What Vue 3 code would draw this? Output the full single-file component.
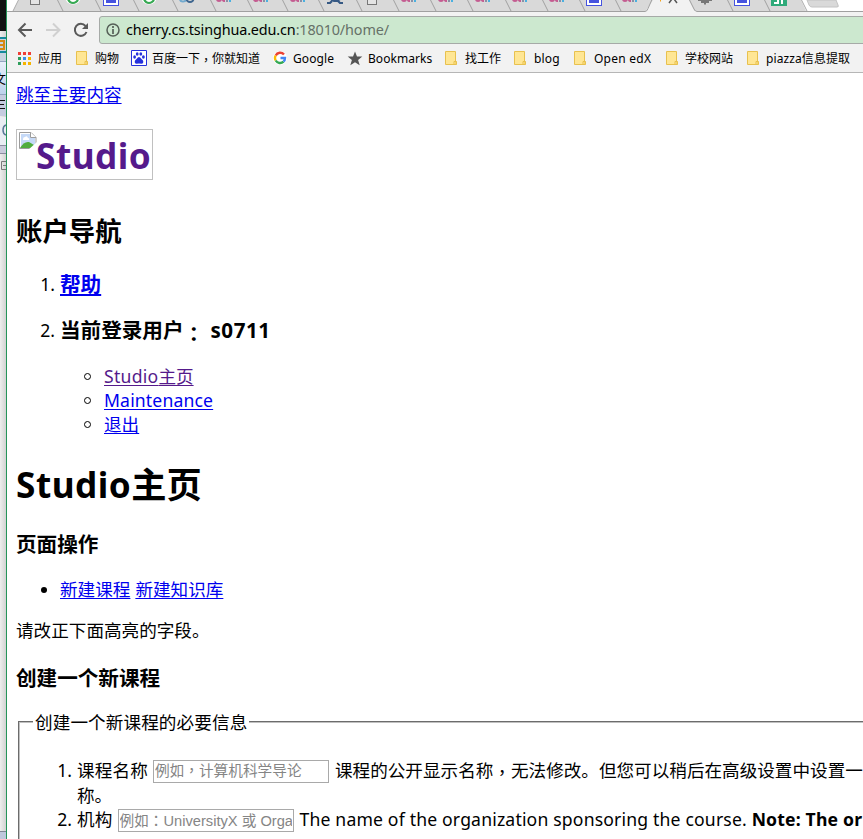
<script setup>
const separators = [57, 95, 133, 172, 210, 247, 282, 318, 356, 393, 430, 467, 505, 542, 579, 615, 727, 764]
const docs = [35, 372]
const googles = [73, 149]
const paws = [111, 594, 742]
const marks = [224, 261, 298, 409, 446, 483, 520, 557, 630]
const dots = [0, 1, 2, 3, 4, 5, 6, 7, 8]
const dotColors = ['#ef3e36', '#ef3e36', '#ef3e36', '#2f9e5b', '#3b8de8', '#f5b400', '#2f9e5b', '#f5b400', '#f5b400']
const bookmarks = [
  { icon: 'folder', text: '购物', cls: 'b1' },
  { icon: 'baidu', text: '百度一下', tail: '你就知道', cls: 'b2' },
  { icon: 'google', text: 'Google', cls: 'b3' },
  { icon: 'star', text: 'Bookmarks', cls: 'b4' },
  { icon: 'folder', text: '找工作', cls: 'b5' },
  { icon: 'folder', text: 'blog', cls: 'b6' },
  { icon: 'folder', text: 'Open edX', cls: 'b7' },
  { icon: 'folder', text: '学校网站', cls: 'b8' },
  { icon: 'folder', text: 'piazza信息提取', cls: 'b9' }
]
</script>

<template>
  <div class="screen">
    <svg class="behind" width="6" height="839" viewBox="0 0 6 839">
      <defs>
        <linearGradient id="edge"><stop offset="0" stop-color="#eeeeee" /><stop offset="1" stop-color="#d2d2d2" /></linearGradient>
        <linearGradient id="bar" x2="0" y2="1"><stop offset="0" stop-color="#e8f0fa" /><stop offset="1" stop-color="#bdd2ec" /></linearGradient>
      </defs>
      <rect width="6" height="839" fill="url(#edge)" />
      <rect width="6" height="31" fill="#111" />
      <rect y="37" width="6" height="24" fill="#c7d3e0" />
      <path d="M0 38h6M0 52h6" stroke="#16899d" stroke-width="2" />
      <path d="M0 41h4v8H0M0 45h3" fill="none" stroke="#d58a12" stroke-width="2" />
      <rect y="61" width="6" height="33" fill="url(#bar)" />
      <rect y="95" width="6" height="21" fill="#c5cce0" />
      <path d="M0 61.500h6M0 94.500h6" stroke="#93a5c1" />
      <text x="-7" y="83" font-size="13">文</text>
      <path d="M0 100.500h5M0 104.500h4M0 108.500h5" stroke="#111" />
      <rect y="117" width="6" height="28" fill="#e9edf3" />
      <path d="M6 125q-3 1-3 5t3 5" fill="none" stroke="#5b7898" stroke-width="1.500" />
      <rect y="146" width="6" height="7" fill="#c9cbdc" />
      <path d="M0 145.500h6M0 153.500h6" stroke="#8b8ca0" />
      <path d="M6 161.500H1.500v8H6M3 165.500h3" fill="none" stroke="#7a7a7a" />
      <rect y="832" width="6" height="7" fill="#bfc7dc" /><path d="M0 831.500h6" stroke="#808695" />
    </svg>
    <div class="window">
      <svg class="tabs" width="856" height="12" viewBox="7 0 856 12">
        <rect x="7" width="856" height="12" fill="#fff" />
        <path d="M19 0H801l5 11H13z" fill="#d9d9d9" />
        <path d="M19-1l-6 12M801-1l6 12" stroke="#a9a9a9" fill="none" />
        <path v-for="s in separators" :key="s" :d="`M${s} -1l6 12`" stroke="#a0a0a0" fill="none" />
        <g v-for="x in docs" :key="x"><rect :x="x - 4.5" y="-8.500" width="9" height="13" fill="#e4e4e4" stroke="#777" /></g>
        <g v-for="x in googles" :key="x">
          <circle :cx="x" cy="-3.500" r="8" fill="#fff" />
          <path :d="`M${x - 5} -1q1.500 4 5 4q3 0 5-3`" fill="none" stroke="#36a852" stroke-width="2.200" />
        </g>
        <g v-for="x in paws" :key="x">
          <rect :x="x - 7.5" y="-9.500" width="15" height="15" fill="#fff" stroke="#4653df" />
          <path :d="`M${x - 5} 3v-3l2-2h6l2 2v3z`" fill="#4653df" />
        </g>
        <g v-for="x in marks" :key="x" fill="none" stroke-width="2">
          <path :d="`M${x - 7} -1q0 2 2 2t2-2M${x - 1} -2v2q0 1 2 1`" stroke="#c45c91" />
          <path :d="`M${x + 3} -2v4`" stroke="#8b8fa5" />
          <path :d="`M${x + 6} -2v4`" stroke="#4ab0e0" />
        </g>
        <g fill="none" stroke-width="2"><circle cx="183" cy="-1.500" r="3" stroke="#71a9ce" /><circle cx="190" cy="-1.500" r="3.500" stroke="#3f668f" /></g>
        <path d="M327 3h3l2-2M343 3h-3l-2-2M331-1l3 2h3l3-2" stroke="#365984" stroke-width="2.200" fill="none" />
        <path d="M653 0h36l6 12H645z" fill="#f2f2f2" />
        <path d="M7 11.500h638q2 0 3-3l4-9M689-1l5 10q1 2.500 3 2.500h166" fill="none" stroke="#a0a0a0" />
        <path d="M660 0h1" stroke="#f4a11a" stroke-width="3" />
        <path d="M669 3l3-4M677 3l-3-4" stroke="#555" stroke-width="1.500" />
        <path d="M698-1h14v2h-3v2h-3v1.500h-2V3h-3V1h-3z" fill="#777" />
        <rect x="771" y="-8" width="16" height="14" fill="#2faa7a" />
        <path d="M774 3h4V0M782 0v4" stroke="#fff" stroke-width="2" fill="none" />
        <path d="M807 0l2 5q1 2 3 2h25q2 0 1-2l-2-5z" fill="#d9d9d9" stroke="#c2c2c2" />
      </svg>
      <div class="toolbar">
        <svg class="nav" width="92" height="30" viewBox="7 14 92 30" fill="none" stroke-width="2">
          <path d="M32 31H19.500M25.500 24.500l-6.500 6.500 6.500 6.500" stroke="#5a5a5a" />
          <path d="M46 31h12.500M53 24.500l6.500 6.500-6.500 6.500" stroke="#d0d0d0" />
          <path d="M85.500 27a6 6 0 1 0 1 6" stroke="#5a5a5a" />
          <path d="M88 24v6h-6z" fill="#5a5a5a" />
        </svg>
        <div class="address">
          <svg width="14" height="14" viewBox="0 0 14 14"><circle cx="7" cy="7" r="6" fill="none" stroke="#555f57" stroke-width="1.500" /><path d="M7 6v5M7 3v2" stroke="#555f57" stroke-width="1.700" /></svg>
          <span class="url">cherry.cs.tsinghua.edu.cn<i>:18010/home/</i></span>
        </div>
      </div>
      <div class="bookmarks">
        <div class="bm b0">
          <svg width="13" height="13"><rect v-for="d in dots" :key="d" :x="(d % 3) * 5" :y="Math.floor(d / 3) * 5" width="3" height="3" :fill="dotColors[d]" /></svg>
          <span>应用</span>
        </div>
        <div v-for="b in bookmarks" :key="b.cls" class="bm" :class="b.cls">
          <svg v-if="b.icon === 'folder'" width="13" height="15" viewBox="0 0 13 15"><path d="M.5.500h10v10h1v3H.5z" fill="#ffe694" stroke="#e8c14e" /><path d="M9 13.500v-3h2v3z" fill="#ffe694" stroke="#e8c14e" /></svg>
          <svg v-else-if="b.icon === 'baidu'" width="16" height="16" viewBox="0 0 16 16"><path d="M.5.500h15v15H.5z" fill="#fff" stroke="#2631dc" /><g fill="#2631dc"><ellipse cx="3.600" cy="7" rx="1.400" ry="1.800" /><ellipse cx="6.200" cy="4" rx="1.400" ry="1.800" /><ellipse cx="9.800" cy="4" rx="1.400" ry="1.800" /><ellipse cx="12.400" cy="7" rx="1.400" ry="1.800" /><path d="M8 7q1.300 0 2 1.500l2 2q1 3-1.500 3.300Q8 13 5.500 13.800 3 13.500 4 10.500l2-2Q6.700 7 8 7z" /></g></svg>
          <svg v-else-if="b.icon === 'google'" width="14" height="14" viewBox="0 0 14 14" fill="none" stroke-width="2.400"><circle cx="7" cy="7" r="7" fill="#fff" /><path d="M11 3.500A5 5 0 0 0 2.700 4.500" stroke="#ea4335" /><path d="M2.700 4.500a5 5 0 0 0 0 5" stroke="#fbbc05" /><path d="M2.700 9.500A5 5 0 0 0 10.500 10.600" stroke="#34a853" /><path d="M10.500 10.600Q12 9.500 12 7H7.500" stroke="#4285f4" /></svg>
          <svg v-else width="16" height="15" viewBox="0 0 16 15"><path d="M8 .5l2 5h5.300l-4.200 3.400 1.600 5.300L8 11.200l-4.700 3 1.600-5.300L.7 5.500H6z" fill="#555" /></svg>
          <span>{{ b.text }}<template v-if="b.tail"><span class="mid">，</span>{{ b.tail }}</template></span>
        </div>
      </div>
      <main class="page">
        <div class="skip"><a>跳至主要内容</a></div>
        <div class="logo">
          <svg width="18" height="18" viewBox="0 0 18 18"><path d="M.5.500H12l5 5v11H.5z" fill="#fff" stroke="#9c9c9c" /><path d="M2 2h9.500v4H16v9H2z" fill="#c5d9f7" /><path d="M11.500.500v5H17" fill="#fff" stroke="#9c9c9c" /><path d="M4 7q0-2 2-2 2-2 3 1 2 0 1 2H4z" fill="#fff" /><path d="M1 16q4-7 9-6l5 3v3z" fill="#50ac3d" /><path d="M9 18l9-8v8z" fill="#fff" /></svg>
          <span>Studio</span>
        </div>
        <h2>账户导航</h2>
        <div class="item first"><span class="num">1.</span><a class="h3">帮助</a></div>
        <div class="item second"><span class="num">2.</span><span class="h3">当前登录用户<span class="mid">：</span> <span class="user">s0711</span></span></div>
        <ul class="account">
          <li><a class="visited"><span class="latin">Studio</span>主页</a></li>
          <li><a class="maint">Maintenance</a></li>
          <li><a>退出</a></li>
        </ul>
        <h1><span>Studio</span>主页</h1>
        <h3>页面操作</h3>
        <div class="item actions"><span class="disc"></span><a>新建课程</a><a>新建知识库</a></div>
        <p>请改正下面高亮的字段。</p>
        <h3 class="create">创建一个新课程</h3>
        <fieldset>
          <legend>创建一个新课程的必要信息</legend>
          <div class="field one"><span class="num">1.</span><label>课程名称</label><input placeholder="例如，计算机科学导论"><span class="tip">课程的公开显示名称<span class="mid">，</span>无法修改。但您可以稍后在高级设置中设置一</span></div>
          <div class="wrapline">称。</div>
          <div class="field two"><span class="num">2.</span><label>机构</label><input placeholder="例如：UniversityX 或 OrganizationX"><span class="tip en">The name of the organization sponsoring the course. <b>Note: The or</b></span></div>
        </fieldset>
      </main>
    </div>
  </div>
</template>

<style>
body { margin: 0; overflow: hidden; }
</style>
<style scoped>
.screen { display: flex; width: 863px; height: 839px; overflow: hidden; font-family: "Noto Sans", "Noto Sans CJK SC", sans-serif; color: #000; background: #fff; }
.behind { flex: none; }
.window { box-sizing: border-box; width: 857px; height: 839px; flex: none; border-left: 1px solid #25945a; overflow: hidden; }
.mid { font-family: "Noto Sans CJK TC", sans-serif; line-height: 1; position: relative; top: .17em; }
.tabs, .nav { display: block; flex: none; }
.toolbar { height: 32px; background: #f2f2f2; display: flex; align-items: center; }
.address { box-sizing: border-box; height: 28px; width: 770px; flex: none; border: 1px solid #a6aaa7; border-radius: 3px; background: #cce8cf; display: flex; align-items: center; padding-left: 6px; gap: 6px; margin-top: 4px; }
.url { font-size: 14.4px; line-height: 24px; letter-spacing: -.13px; white-space: nowrap; }
.url i { font-style: normal; color: #667168; }
.bookmarks { height: 28px; box-sizing: content-box; background: #f2f2f2; border-bottom: 1px solid #b6b6b6; display: flex; font-size: 12px; }
.bm { display: flex; align-items: center; gap: 7px; white-space: nowrap; flex: none; height: 28px; }
.bm svg { flex: none; }
.b0 { width: 58px; padding-left: 11px; }
.b1 { width: 55px; gap: 6px; }
.b2 { width: 142px; gap: 5px; }
.b3 { width: 74px; gap: 6px; letter-spacing: .1px; }
.b4 { width: 98px; gap: 5px; letter-spacing: .05px; }
.b5 { width: 69px; }
.b6 { width: 60px; letter-spacing: .15px; }
.b7 { width: 92px; letter-spacing: .25px; }
.b8 { width: 81px; gap: 6px; }
.b9 { gap: 6px; letter-spacing: .1px; }
.page { padding-left: 9px; font-size: 17.6px; white-space: nowrap; }
a { color: #00e; text-decoration: underline; text-decoration-thickness: 1px; text-underline-offset: 2px; }
a.visited { color: #551a8b; }
a.h3 { text-decoration-thickness: 2px; }
.skip { height: 24px; line-height: 24px; margin-top: 9px; }
.logo { box-sizing: border-box; width: 137px; height: 51px; margin-top: 23px; border: 1px solid #c0c0c0; display: flex; padding: 2px 0 0 2px; color: #551a8b; font-weight: 700; font-size: 35.2px; line-height: 46px; }
.logo svg { flex: none; }
.logo span { letter-spacing: .5px; margin-left: -1px; }
h1, h2, h3, p { margin: 0; }
h2 { font-size: 26.4px; line-height: 36px; margin-top: 33px; }
.item { display: flex; align-items: center; height: 28px; }
.item .num { width: 39px; margin-right: 5px; text-align: right; }
.h3 { font-size: 20.6px; font-weight: 700; line-height: 28px; }
.user { letter-spacing: .5px; margin-left: 1px; }
.first { margin-top: 21px; }
.second { margin-top: 18px; }
.account { margin: 20px 0 0; padding: 0 0 0 88px; list-style: none; }
.account li { height: 24px; line-height: 24px; position: relative; }
.account li::before { content: ""; box-sizing: border-box; position: absolute; left: -20px; top: 9px; width: 7px; height: 7px; border: 1px solid #000; border-radius: 50%; }
.latin { letter-spacing: .25px; }
.maint { letter-spacing: .15px; }
h1 { font-size: 35.2px; line-height: 48px; margin-top: 24px; }
h1 span { letter-spacing: .5px; }
h3 { font-size: 20.6px; line-height: 28px; margin-top: 22px; }
.actions { margin-top: 16px; gap: 5px; }
.disc { width: 6px; height: 6px; border-radius: 50%; background: #000; margin: 3px 8px 0 25px; }
p { line-height: 24px; margin-top: 16px; }
.create { margin-top: 22px; }
fieldset { box-sizing: border-box; width: 900px; height: 160px; border: 2px groove #c0c0c0; margin: 18px 2px 0; padding: 0 0 0 13px; }
legend { padding: 0 2px; line-height: 24px; letter-spacing: .1px; }
.field { display: flex; align-items: center; height: 24px; line-height: 24px; }
.field .num { width: 39px; margin-right: 5px; text-align: right; flex: none; }
.field label { margin-right: 5px; letter-spacing: .15px; }
.one { margin-top: 23px; height: 25px; }
.wrapline { height: 25px; line-height: 27px; padding-left: 44px; }
.en { letter-spacing: .17px; }
input { box-sizing: border-box; width: 176px; height: 23px; border: 1px solid #a9a9a9; padding: 1px; margin: 3px 6px 0 0; font: 14.67px "Liberation Sans", "Noto Sans CJK TC", sans-serif; flex: none; }
input::placeholder { color: #858585; }
</style>
